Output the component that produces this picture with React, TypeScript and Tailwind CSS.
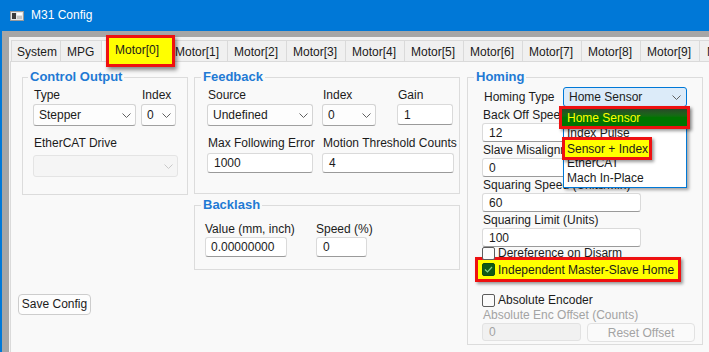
import React from 'react';

const motorTabs = [1, 2, 3, 4, 5, 6, 7, 8, 9];
const homingTypes = ['Home Sensor', 'Index Pulse', 'Sensor + Index', 'EtherCAT', 'Mach In-Place'];
// items hidden under the highlight boxes
const covered = ['Home Sensor', 'Sensor + Index'];

const Chevron = ({ disabled }: { disabled?: boolean }) => (
  <svg width="9" height="5" viewBox="0 0 9 5" className="shrink-0">
    <path
      d="M0.5 0.5 L4.5 4.5 L8.5 0.5"
      fill="none"
      stroke={disabled ? '#c9c9c9' : '#606060'}
      strokeWidth="1"
    />
  </svg>
);

const Combo = ({
  value,
  className = '',
  disabled,
}: {
  value?: string;
  className?: string;
  disabled?: boolean;
}) => (
  <div
    className={`flex items-center justify-between rounded-[3px] border pl-[5px] pr-[4px] ${
      disabled
        ? 'border-[#e4e4e4] bg-[#f5f5f5]'
        : 'border-[#d4d4d4] border-b-[#a0a0a0] bg-[#fdfdfd]'
    } ${className}`}
  >
    <span>{value}</span>
    <Chevron disabled={disabled} />
  </div>
);

const Field = ({ value, className = '' }: { value: string; className?: string }) => (
  <div
    className={`flex items-center rounded-[3px] border border-[#dadada] border-b-[#9a9a9a] bg-white pl-[6px] ${className}`}
  >
    {value}
  </div>
);

const Label = ({ children, className = '' }: { children: React.ReactNode; className?: string }) => (
  <div className={`whitespace-nowrap pl-[1px] leading-[15px] ${className}`}>{children}</div>
);

const Check = ({ checked }: { checked?: boolean }) =>
  checked ? (
    <span className="flex h-[13px] w-[13px] shrink-0 items-center justify-center rounded-[2px] border border-[#0d4f12] bg-[#0f5a16]">
      <svg width="9" height="7" viewBox="0 0 9 7">
        <path d="M1 3.5 L3.5 6 L8 1" fill="none" stroke="#86d486" strokeWidth="1.2" />
      </svg>
    </span>
  ) : (
    <span className="h-[13px] w-[13px] shrink-0 rounded-[2px] border border-[#5c5c5c] bg-[#fbfbfb]" />
  );

const Group = ({
  title,
  legendClass = 'ml-[6px]',
  className = '',
  children,
}: {
  title: string;
  legendClass?: string;
  className?: string;
  children: React.ReactNode;
}) => (
  <fieldset className={`border border-[#dcdcdc] ${className}`}>
    <legend
      className={`px-[2px] text-[13px] font-bold leading-[16px] text-[#1f7ad4] ${legendClass}`}
    >
      {title}
    </legend>
    {children}
  </fieldset>
);

const tabClass =
  'flex shrink-0 items-center whitespace-nowrap border border-b-0 border-[#dadada] bg-[#f0f0f0] pt-[2px]';

export default function App() {
  return (
    <div className="h-[352px] w-[709px] overflow-hidden bg-[#0078d7] pl-[2px] font-['Liberation_Sans',Arial,sans-serif] text-[12px] text-[#1b1b1b]">
      {/* Title bar */}
      <div className="flex h-[31px] items-center gap-[7px] pl-[8px] text-white">
        <svg width="14" height="10" viewBox="0 0 14 10">
          <rect x="0.5" y="0.5" width="13" height="9" fill="#e6e6e6" stroke="#9a9a9a" />
          <rect x="2" y="2" width="4" height="6" fill="#3a3a3a" />
          <rect x="7" y="2" width="5" height="2" fill="#ffffff" />
          <rect x="7" y="5" width="5" height="3" fill="#c4c4c4" />
        </svg>
        <span className="leading-[15px]">M31 Config</span>
      </div>

      <div className="h-[321px] bg-[#a6a6a6] pl-[7px] pt-[6px]">
        <div className="relative h-full bg-[#f3f3f3] pl-[1px] pt-[3px]">
          {/* Tabs */}
          <div className="flex h-[21px] overflow-hidden pl-[1px]">
            <div className={`${tabClass} w-[50px] pl-[5px]`}>System</div>
            <div className={`${tabClass} -ml-px w-[42px] pl-[6px]`}>MPG</div>
            <div className={`${tabClass} -ml-px w-[68px] !bg-[#f9f9f9]`} />
            {motorTabs.map((n) => (
              <div key={n} className={`${tabClass} -ml-px w-[60px] pl-[6px]`}>
                Motor[{n}]
              </div>
            ))}
            <div className={`${tabClass} -ml-px w-[60px] pl-[7px]`}>Motor[10]</div>
          </div>

          {/* Motor[0] highlight */}
          <div className="absolute left-[97px] top-[-2px] flex h-[32px] w-[69px] items-center border-[3px] border-[#ee1111] bg-[#ffff00] pb-[2px] pl-[6px] shadow-[2px_3px_4px_rgba(0,0,0,0.45)]">
            Motor[0]
          </div>

          {/* Tab page */}
          <div className="flex h-[300px] gap-[6px] border border-r-0 border-[#dadada] bg-[#f9f9f9] pl-[11px] pt-[7px]">
            {/* Column 1 */}
            <div className="flex w-[166px] shrink-0 flex-col">
              <Group title="Control Output" legendClass="ml-[5px]">
                <div className="pb-[17px] pl-[10px] pt-[3px]">
                  <div className="flex gap-[5px]">
                    <div className="w-[103px]">
                      <Label>Type</Label>
                      <Combo value="Stepper" className="mt-[1px] h-[22px]" />
                    </div>
                    <div className="w-[35px]">
                      <Label>Index</Label>
                      <Combo value="0" className="mt-[1px] h-[22px]" />
                    </div>
                  </div>
                  <Label className="mt-[10px]">EtherCAT Drive</Label>
                  <Combo disabled className="mt-[4px] h-[22px] w-[145px]" />
                </div>
              </Group>
              <button className="-ml-[4px] mt-[99px] h-[21px] w-[73px] rounded-[4px] border border-[#cdcdcd] bg-[#fdfdfd] text-[12px] leading-[15px] text-[#1b1b1b]">
                Save Config
              </button>
            </div>

            {/* Column 2 */}
            <div className="flex w-[266px] shrink-0 flex-col">
              <Group title="Feedback">
                <div className="pb-[20px] pl-[12px] pt-[3px]">
                  <div className="flex">
                    <div className="w-[115px]">
                      <Label>Source</Label>
                      <Combo value="Undefined" className="mt-[1px] h-[22px] w-[106px]" />
                    </div>
                    <div className="w-[75px]">
                      <Label>Index</Label>
                      <Combo value="0" className="mt-[1px] h-[22px] w-[54px]" />
                    </div>
                    <div className="w-[56px]">
                      <Label>Gain</Label>
                      <Field value="1" className="mt-[1px] h-[21px] w-[56px]" />
                    </div>
                  </div>
                  <div className="mt-[10px] flex">
                    <div className="w-[115px]">
                      <Label>Max Following Error</Label>
                      <Field value="1000" className="mt-[2px] h-[20px] w-[106px]" />
                    </div>
                    <div className="w-[132px]">
                      <Label>Motion Threshold Counts</Label>
                      <Field value="4" className="mt-[2px] h-[20px] w-[132px]" />
                    </div>
                  </div>
                </div>
              </Group>

              <Group title="Backlash" className="mt-[3px]">
                <div className="flex pb-[12px] pl-[9px] pt-[9px]">
                  <div className="w-[111px]">
                    <Label>Value (mm, inch)</Label>
                    <Field value="0.00000000" className="ml-[1px] h-[20px] w-[82px] !pl-[5px]" />
                  </div>
                  <div>
                    <Label>Speed (%)</Label>
                    <Field value="0" className="ml-[1px] h-[20px] w-[51px]" />
                  </div>
                </div>
              </Group>
            </div>

            {/* Column 3 */}
            <div className="ml-[1px] w-[236px] shrink-0">
              <Group title="Homing">
                <div className="pb-[2px] pl-[15px] pt-[2px]">
                  <div className="flex items-center">
                    <Label className="w-[80px]">Homing Type</Label>
                    <div className="relative">
                      <div className="flex h-[20px] w-[124px] items-center justify-between rounded-[3px] border border-[#0078d7] bg-[#dcebf9] pl-[5px] pr-[5px]">
                        <span>Home Sensor</span>
                        <Chevron />
                      </div>
                      {/* Open list */}
                      <div className="absolute left-0 top-full z-10 w-[124px] border border-[#0078d7] bg-white pb-[1px] pt-[3px] shadow-[2px_2px_3px_rgba(0,0,0,0.35)]">
                        {homingTypes.map((t) => (
                          <div
                            key={t}
                            className={`h-[15px] whitespace-nowrap pl-[3px] leading-[15px] ${
                              covered.includes(t) ? 'invisible' : ''
                            }`}
                          >
                            {t}
                          </div>
                        ))}
                        <div className="absolute left-[-5px] top-[-2px] flex h-[23px] w-[131px] items-center whitespace-nowrap border-[3px] border-[#ee1111] bg-gradient-to-b from-[#274a27] via-[#007400] to-[#007400] pl-[5px] text-[#ffff00] shadow-[2px_2px_3px_rgba(0,0,0,0.4)]">
                          Home Sensor
                        </div>
                        <div className="absolute left-[-2px] top-[29px] flex h-[23px] w-[90px] items-center whitespace-nowrap border-[3px] border-[#ee1111] bg-[#ffff00] pl-[2px] shadow-[2px_2px_3px_rgba(0,0,0,0.4)]">
                          Sensor + Index
                        </div>
                      </div>
                    </div>
                  </div>

                  <div className="whitespace-nowrap leading-[16px]">Back Off Speed (Units/Min)</div>
                  <Field value="12" className="-ml-[1px] h-[19px] w-[159px]" />
                  <div className="whitespace-nowrap leading-[16px]">Slave Misalignment Limit</div>
                  <Field value="0" className="-ml-[1px] h-[19px] w-[159px]" />
                  <div className="whitespace-nowrap leading-[16px]">Squaring Speed (Units/Min)</div>
                  <Field value="60" className="-ml-[1px] h-[19px] w-[159px]" />
                  <div className="whitespace-nowrap leading-[16px]">Squaring Limit (Units)</div>
                  <Field value="100" className="-ml-[1px] h-[19px] w-[159px]" />

                  <div className="-ml-[1px] -mt-[2px] flex h-[16px] items-center gap-[3px]">
                    <Check />
                    <span>Dereference on Disarm</span>
                  </div>
                  <div className="-ml-[8px] -mt-[4px] flex h-[25px] w-[206px] items-center gap-[3px] whitespace-nowrap border-[3px] border-[#ee1111] bg-[#ffff00] pl-[4px] shadow-[2px_2px_3px_rgba(0,0,0,0.4)]">
                    <Check checked />
                    <span>Independent Master-Slave Home</span>
                  </div>
                  <div className="-ml-[1px] mt-[10px] flex h-[16px] items-center gap-[3px]">
                    <Check />
                    <span>Absolute Encoder</span>
                  </div>
                  <div className="whitespace-nowrap leading-[15px] text-[#a3a3a3]">Absolute Enc Offset (Counts)</div>
                  <div className="-ml-[1px] flex gap-[6px]">
                    <div className="flex h-[18px] w-[99px] items-center rounded-[3px] border border-[#e2e2e2] bg-[#f1f1f1] pl-[6px] text-[#a3a3a3]">
                      0
                    </div>
                    <div className="flex h-[19px] w-[108px] items-center justify-center rounded-[4px] border border-[#e2e2e2] bg-[#fafafa] text-[#a3a3a3]">
                      Reset Offset
                    </div>
                  </div>
                </div>
              </Group>
            </div>
          </div>
        </div>
      </div>
    </div>
  );
}
